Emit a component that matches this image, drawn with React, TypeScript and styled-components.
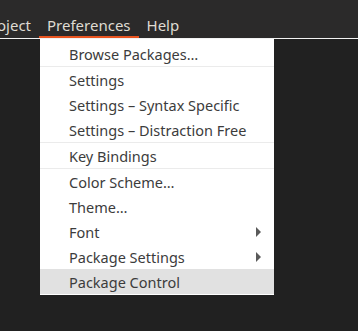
import styled, { createGlobalStyle } from 'styled-components';

const GlobalStyle = createGlobalStyle`
  html, body {
    margin: 0;
    padding: 0;
    background-color: #212121;
  }
  body {
    font-family: 'Noto Sans', 'DejaVu Sans', sans-serif;
    overflow: hidden;
  }
`;

const StyledPage = styled.div`
  position: relative;
  width: 358px;
  height: 331px;
  background-color: #212121;
`;

const StyledMenuBar = styled.div`
  display: flex;
  flex-direction: row;
  height: 38px;
  background-color: #2b2a2a;
  border-bottom: 1px solid #f2f2f2;
  overflow: hidden;
`;

const StyledBarItem = styled.div`
  display: flex;
  align-items: flex-end;
  padding: 0 8px 3px;
  margin-left: ${(props) => props.$shift || 0}px;
  color: #dfdbd2;
  font-size: 15px;
  white-space: nowrap;
  box-shadow: ${(props) => (props.$active ? 'inset 0 -2px 0 #e95420' : 'none')};
`;

const StyledDropdown = styled.div`
  position: absolute;
  left: 40px;
  top: 39px;
  width: 234px;
  padding: 2px 0 1px;
  background-color: #ffffff;
  display: flex;
  flex-direction: column;
`;

const StyledItem = styled.div`
  display: flex;
  flex-direction: row;
  align-items: center;
  justify-content: space-between;
  height: 25px;
  padding: 0 13px 0 29px;
  color: #3c3c3c;
  font-size: 14.5px;
  white-space: nowrap;
  background-color: ${(props) => (props.$hover ? '#e1e1e1' : 'transparent')};
`;

const StyledSeparator = styled.div`
  height: 1px;
  background-color: #ebebeb;
`;

const StyledArrow = styled.svg`
  width: 5px;
  height: 10px;
  fill: #5a5a5a;
`;

function SubArrow() {
  return (
    <StyledArrow viewBox="0 0 5 10">
      <polygon points="0,0 5,5 0,10" />
    </StyledArrow>
  );
}

const groups = [
  ['Browse Packages…'],
  ['Settings', 'Settings – Syntax Specific', 'Settings – Distraction Free'],
  ['Key Bindings'],
  ['Color Scheme…', 'Theme…', 'Font', 'Package Settings', 'Package Control'],
];

const submenus = ['Font', 'Package Settings'];

function App() {
  return (
    <StyledPage>
      <GlobalStyle />
      <StyledMenuBar>
        <StyledBarItem $shift={-26}>Project</StyledBarItem>
        <StyledBarItem $active>Preferences</StyledBarItem>
        <StyledBarItem>Help</StyledBarItem>
      </StyledMenuBar>
      <StyledDropdown>
        {groups.map((group, gi) => (
          <div key={gi}>
            {gi > 0 && <StyledSeparator />}
            {group.map((label) => (
              <StyledItem key={label} $hover={label === 'Package Control'}>
                <span>{label}</span>
                {submenus.includes(label) && <SubArrow />}
              </StyledItem>
            ))}
          </div>
        ))}
      </StyledDropdown>
    </StyledPage>
  );
}

export default App;
